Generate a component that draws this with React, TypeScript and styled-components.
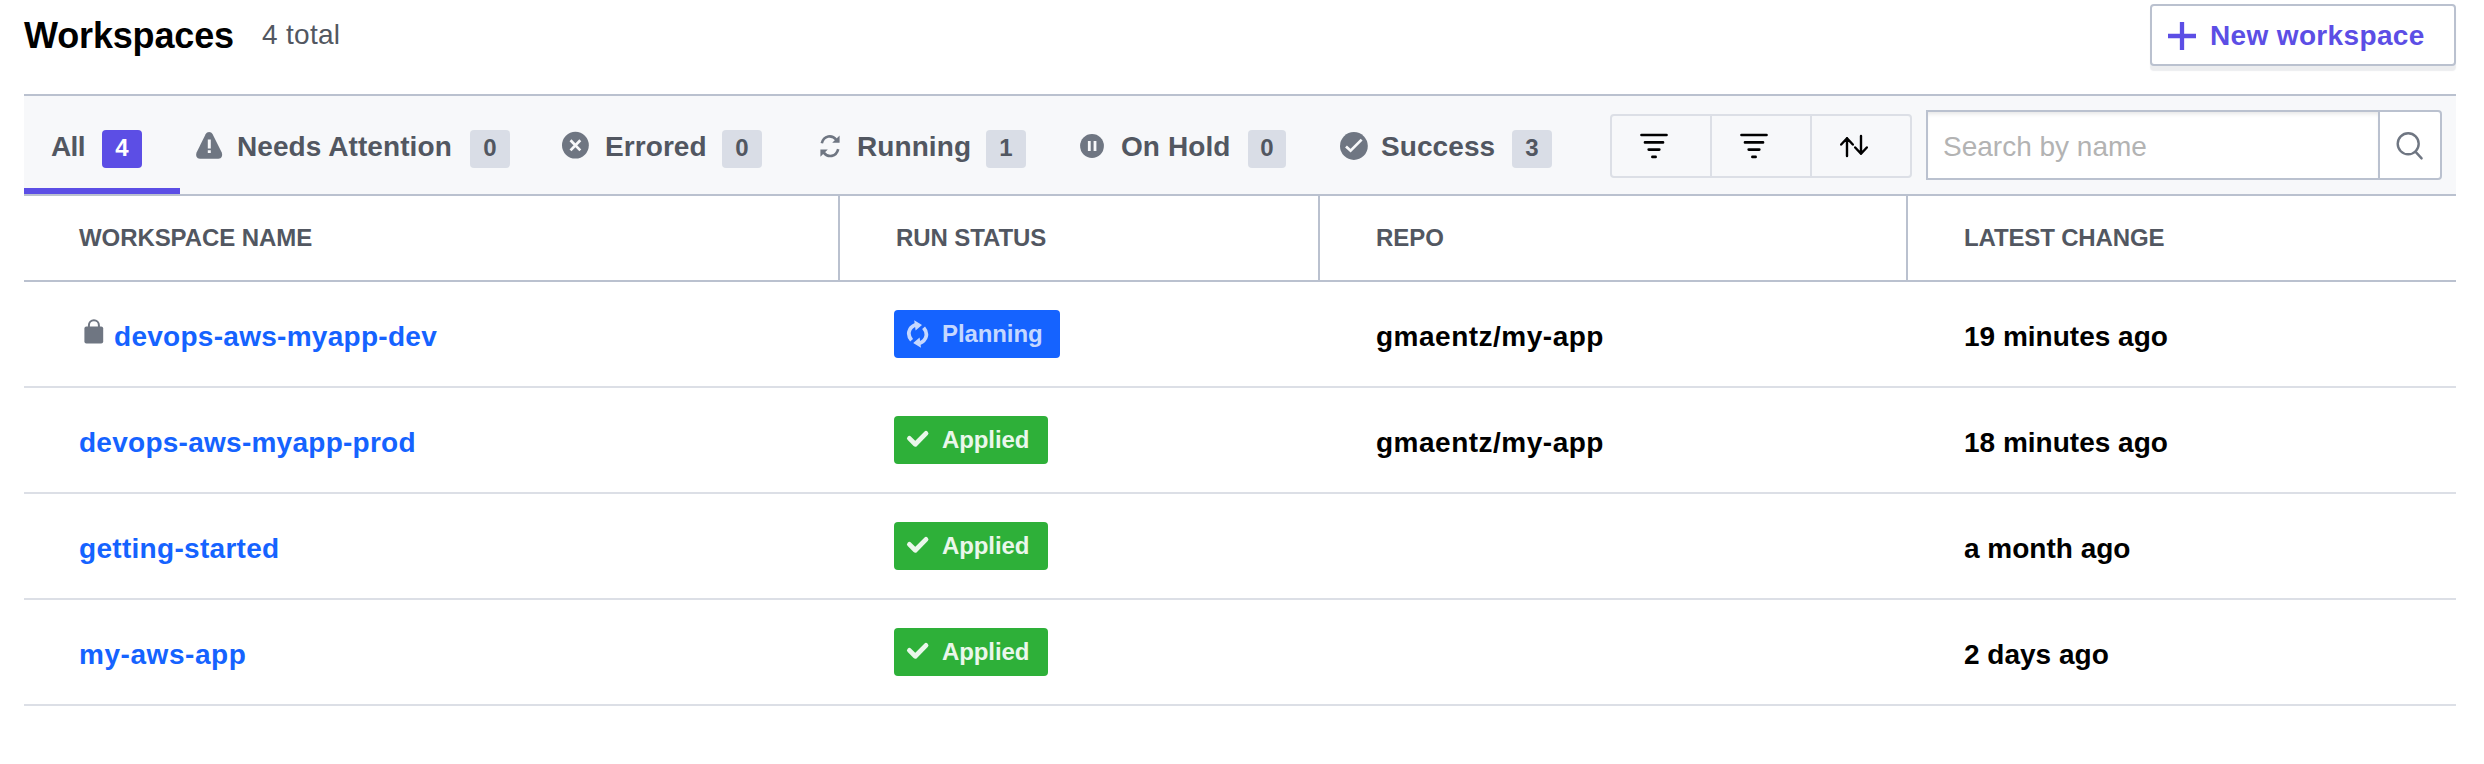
import React from "react";
import styled, { createGlobalStyle } from "styled-components";

const GlobalStyle = createGlobalStyle`
  * { box-sizing: border-box; }
  body {
    margin: 0;
    background: #fff;
    color: #000;
    font-family: "Liberation Sans", Arial, sans-serif;
    font-size: 28px;
    line-height: 32px;
  }
`;

const Page = styled.main`
  width: 2484px;
  height: 764px;
  padding: 0 28px 0 24px;
`;

const PageHeader = styled.header`
  display: flex;
  align-items: flex-start;
  height: 94px;
`;

const Title = styled.h1`
  margin: 0;
  padding-top: 16px;
  width: 238px;
  font-size: 36px;
  line-height: 40px;
  letter-spacing: -0.15px;
`;

const Total = styled.span`
  padding-top: 19px;
  color: #525761;
  letter-spacing: 0.3px;
`;

const NewButton = styled.button`
  display: flex;
  align-items: center;
  gap: 13px;
  width: 306px;
  height: 62px;
  margin: 4px 0 0 auto;
  padding: 1px 0 0 15px;
  border: 2px solid #bac1cf;
  border-radius: 4px;
  background: #fff;
  box-shadow: 0 5px 1px rgba(97, 104, 125, 0.12);
  color: #5c4ee5;
  font: bold 28px/32px "Liberation Sans", Arial, sans-serif;
  letter-spacing: 0.35px;
  white-space: nowrap;
`;

const NewLabel = styled.span`
  padding-top: 1px;
`;

const Toolbar = styled.div`
  display: flex;
  align-items: flex-start;
  height: 102px;
  padding-right: 14px;
  border: solid #bac1cf;
  border-width: 2px 0;
  background: #f7f8fa;
`;

const Tab = styled.div<{ $width: number; $active?: boolean }>`
  display: flex;
  align-items: flex-start;
  width: ${(p) => p.$width}px;
  height: 98px;
  padding: 34px 38px 0 ${(p) => (p.$active ? 27 : 13)}px;
  box-shadow: ${(p) => (p.$active ? "inset 0 -6px 0 #5c4ee5" : "none")};
  color: #525761;
  font-weight: bold;
`;

const TabIcon = styled.svg`
  flex: none;
  width: 32px;
  height: 32px;
  margin: -1px 12px 0 0;
  fill: #6f7682;
`;

const TabLabel = styled.span<{ $spacing: number }>`
  flex: 1;
  padding-top: 1px;
  letter-spacing: ${(p) => p.$spacing}px;
  white-space: nowrap;
`;

const Count = styled.span<{ $active?: boolean; $width?: number }>`
  width: ${(p) => p.$width ?? 40}px;
  height: 38px;
  border-radius: 4px;
  background: ${(p) => (p.$active ? "#5c4ee5" : "#d9dde6")};
  color: ${(p) => (p.$active ? "#fff" : "#525761")};
  font-size: 24px;
  line-height: 36px;
  text-align: center;
`;

const FilterGroup = styled.div`
  display: flex;
  height: 64px;
  margin: 18px 14px 0 auto;
  border: 2px solid #dcdfe6;
  border-radius: 4px;
`;

const FilterButton = styled.button`
  display: flex;
  width: 100px;
  padding: 16px 0 0 28px;
  border: 0;
  border-right: 2px solid #dcdfe6;
  background: none;
  &:last-child {
    width: 98px;
    border-right: 0;
  }
`;

const SearchBox = styled.div`
  display: flex;
  width: 516px;
  height: 70px;
  margin-top: 14px;
  border: 2px solid #bac1cf;
  border-radius: 0 4px 4px 0;
  background: #fff;
`;

const SearchInput = styled.input`
  flex: 1;
  min-width: 0;
  padding: 3px 15px 0;
  border: 0;
  border-right: 2px solid #bac1cf;
  border-radius: 0;
  background: #fff;
  box-shadow: inset 0 4px 4px -2px rgba(0, 0, 0, 0.1);
  font: 28px "Liberation Sans", Arial, sans-serif;
  outline: 0;
  &::placeholder {
    color: #b3b3b3;
    opacity: 1;
  }
`;

const SearchButton = styled.button`
  display: flex;
  width: 60px;
  padding: 18px 0 0 15px;
  border: 0;
  background: none;
`;

const GridRow = styled.div`
  display: grid;
  grid-template-columns: 816px 480px 588px 548px;
`;

const HeadRow = styled(GridRow)`
  height: 86px;
  border-bottom: 2px solid #bac1cf;
`;

const HeadCell = styled.div<{ $spacing: number }>`
  padding: 28px 0 0 56px;
  border-right: 2px solid #bac1cf;
  color: #525761;
  font-size: 24px;
  font-weight: bold;
  line-height: 28px;
  letter-spacing: ${(p) => p.$spacing}px;
  &:first-child {
    padding-left: 55px;
  }
  &:last-child {
    border-right: 0;
  }
`;

const BodyRow = styled(GridRow)`
  height: 106px;
  border-bottom: 2px solid #dcdfe6;
  font-weight: bold;
`;

const Cell = styled.div<{ $spacing?: number }>`
  display: flex;
  align-items: flex-start;
  padding: 39px 0 0 56px;
  letter-spacing: ${(p) => p.$spacing ?? 0}px;
  &:first-child {
    padding-left: 55px;
  }
`;

const StatusCell = styled.div`
  padding: 28px 0 0 54px;
`;

const NameLink = styled.a<{ $spacing: number }>`
  color: #1563ff;
  letter-spacing: ${(p) => p.$spacing}px;
`;

const LockIcon = styled.svg`
  width: 20px;
  height: 26px;
  margin: -2px 10px 0 5px;
`;

const Status = styled.span<{ $planning: boolean }>`
  display: flex;
  width: ${(p) => (p.$planning ? 166 : 154)}px;
  height: 48px;
  padding: 10px 0 0 12px;
  border-radius: 4px;
  background: ${(p) => (p.$planning ? "#1563ff" : "#2eb039")};
  color: ${(p) => (p.$planning ? "#c5d8ff" : "#eaf7eb")};
  font-size: 24px;
  line-height: 28px;
  letter-spacing: -0.1px;
`;

const StatusIcon = styled.svg`
  width: 26px;
  height: 28px;
  margin-right: 10px;
`;

const glyphs = {
  warning: (
    <>
      <path d="M12.6 5.2C14.2 2.3 18 2.3 19.6 5.2L28.6 23.2C30 26.2 28.6 29.7 25.4 29.7H6.9C3.7 29.7 2.3 26.2 3.7 23.2Z" />
      <path d="M14.8 10.4h3v9.2h-3zM14.8 21.3h3v2.8h-3z" fill="#f7f8fa" />
    </>
  ),
  error: (
    <>
      <circle cx="14.4" cy="16.2" r="13.4" />
      <path d="M9.5 11.2l9.8 10.2M19.3 11.2L9.5 21.4" stroke="#f7f8fa" strokeWidth="2.7" />
    </>
  ),
  running: (
    <>
      <path d="M8.8 14.3C10.8 6.3 19 5.4 23.3 10.8M25.2 20.1C23.2 28.1 15 29 10.7 23.6" fill="none" stroke="#6f7682" strokeWidth="2.6" />
      <path d="M26.6 6.6v7.2h-7.4zM7.4 27.8v-7.2h7.4z" />
    </>
  ),
  hold: (
    <>
      <circle cx="15" cy="17" r="11.9" />
      <path d="M10.9 12h2.8v10h-2.8zM16.6 12h2.8v10h-2.8z" fill="#f7f8fa" />
    </>
  ),
  success: (
    <>
      <circle cx="16.9" cy="17" r="13.9" />
      <path d="M9 17.4l4.6 4.3L24.6 10.6" fill="none" stroke="#f7f8fa" strokeWidth="2.7" />
    </>
  ),
};

type Glyph = keyof typeof glyphs;

const tabs: { icon: Glyph; label: string; count: number; width: number; countWidth?: number }[] = [
  { icon: "warning", label: "Needs Attention", count: 0, width: 368 },
  { icon: "error", label: "Errored", count: 0, width: 252 },
  { icon: "running", label: "Running", count: 1, width: 264 },
  { icon: "hold", label: "On Hold", count: 0, width: 260, countWidth: 38 },
  { icon: "success", label: "Success", count: 3, width: 266 },
];

const rows = [
  { name: "devops-aws-myapp-dev", spacing: 0.28, locked: true, status: "Planning", repo: "gmaentz/my-app", changed: "19 minutes ago" },
  { name: "devops-aws-myapp-prod", spacing: 0.26, status: "Applied", repo: "gmaentz/my-app", changed: "18 minutes ago" },
  { name: "getting-started", spacing: 0.3, status: "Applied", repo: "", changed: "a month ago" },
  { name: "my-aws-app", spacing: 0.55, status: "Applied", repo: "", changed: "2 days ago" },
];

const FilterIcon = () => (
  <svg width="28" height="28" viewBox="0 0 28 28" stroke="#000" strokeWidth="2.7" strokeLinecap="round">
    <path d="M1.5 3h25M5 10.4h18M8.7 17.6h10.6M12.4 24.9h3.2" />
  </svg>
);

const SortIcon = () => (
  <svg width="28" height="28" viewBox="0 0 28 28" fill="none" stroke="#000" strokeWidth="2.4" strokeLinecap="round" strokeLinejoin="round">
    <path d="M7 24V6.2M1.2 12.5L7 6.2l5.8 6.3M21 4v17.8M15.2 15.5L21 21.8l5.8-6.3" />
  </svg>
);

export default function App() {
  return (
    <Page>
      <GlobalStyle />
      <PageHeader>
        <Title>Workspaces</Title>
        <Total>4 total</Total>
        <NewButton>
          <svg width="30" height="30" viewBox="0 0 30 30" stroke="#5c4ee5" strokeWidth="4.3">
            <path d="M15 1v28M1 15h28" />
          </svg>
          <NewLabel>New workspace</NewLabel>
        </NewButton>
      </PageHeader>
      <Toolbar>
        <Tab $width={156} $active>
          <TabLabel $spacing={-0.6}>All</TabLabel>
          <Count $active>4</Count>
        </Tab>
        {tabs.map((tab) => (
          <Tab key={tab.label} $width={tab.width}>
            <TabIcon viewBox="0 0 32 32">{glyphs[tab.icon]}</TabIcon>
            <TabLabel $spacing={0.08}>{tab.label}</TabLabel>
            <Count $width={tab.countWidth}>{tab.count}</Count>
          </Tab>
        ))}
        <FilterGroup>
          <FilterButton aria-label="Filter by status"><FilterIcon /></FilterButton>
          <FilterButton aria-label="Filter by tag"><FilterIcon /></FilterButton>
          <FilterButton aria-label="Sort"><SortIcon /></FilterButton>
        </FilterGroup>
        <SearchBox>
          <SearchInput placeholder="Search by name" />
          <SearchButton aria-label="Search">
            <svg width="30" height="32" viewBox="0 0 30 32" fill="none" stroke="#6f7682" strokeWidth="2.4" strokeLinecap="round">
              <circle cx="13.2" cy="13.8" r="10.5" />
              <path d="M20.4 21.6l6.2 6.8" />
            </svg>
          </SearchButton>
        </SearchBox>
      </Toolbar>
      <HeadRow>
        <HeadCell $spacing={-0.08}>WORKSPACE NAME</HeadCell>
        <HeadCell $spacing={-0.1}>RUN STATUS</HeadCell>
        <HeadCell $spacing={0}>REPO</HeadCell>
        <HeadCell $spacing={-0.15}>LATEST CHANGE</HeadCell>
      </HeadRow>
      {rows.map((row) => (
        <BodyRow key={row.name}>
          <Cell>
            {row.locked && (
              <LockIcon viewBox="0 0 20 26">
                <rect x="0.4" y="7.6" width="18.8" height="17" rx="2" fill="#6f7682" />
                <path d="M4.9 8.5V6.2a5 5 0 0 1 10 0v2.3" fill="none" stroke="#6f7682" strokeWidth="2" />
              </LockIcon>
            )}
            <NameLink $spacing={row.spacing}>{row.name}</NameLink>
          </Cell>
          <StatusCell>
            <Status $planning={row.status === "Planning"}>
              <StatusIcon viewBox="0 0 26 28" fill="none" stroke="currentColor">
                {row.status === "Planning" ? (
                  <>
                    <path d="M5.6 20.2C0.9 14.8 2.2 7.7 9.6 4.8M17.6 7.8C22.3 13.2 21 20.3 13.6 23.2" strokeWidth="3.8" />
                    <path d="M8.2 0.2L16 4.9L9.6 10.4ZM15 27.8L7.2 23.1L13.6 17.6Z" fill="currentColor" stroke="none" />
                  </>
                ) : (
                  <path d="M3.4 12.4l5.9 5.8L20 7.4" strokeWidth="4.8" strokeLinejoin="round" strokeLinecap="round" />
                )}
              </StatusIcon>
              {row.status}
            </Status>
          </StatusCell>
          <Cell $spacing={0.5}>{row.repo}</Cell>
          <Cell $spacing={0}>{row.changed}</Cell>
        </BodyRow>
      ))}
    </Page>
  );
}
